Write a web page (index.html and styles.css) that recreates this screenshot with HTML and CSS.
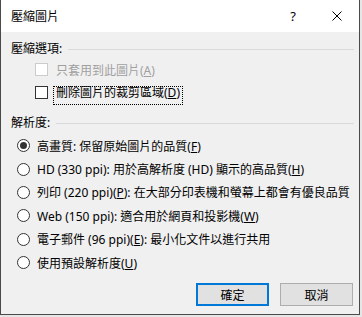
FILE: index.html
```html
<!DOCTYPE html>
<html>
    <head>
        <meta charset="utf-8" />
        <link rel="stylesheet" href="styles.css">
    </head>

    <body>
        <div class="dialog">
            <div class="titlebar">
                <span class="title">壓縮圖片</span>
                <span class="caption-btn help">?</span>
                <span class="caption-btn close">
                    <svg width="10" height="10" viewBox="0 0 10 10">
                        <path d="M0.5 0.5L9.5 9.5M9.5 0.5L0.5 9.5" stroke="#000" stroke-width="1" fill="none" />
                    </svg>
                </span>
            </div>

            <div class="content">
                <div class="group-head"><span>壓縮選項:</span><span class="rule"></span></div>
                <label class="check-row disabled">
                    <input type="checkbox" class="box" disabled />
                    <span>只套用到此圖片(<u>A</u>)</span>
                </label>
                <label class="check-row">
                    <input type="checkbox" class="box" />
                    <span class="focus">刪除圖片的裁剪區域(<u>D</u>)</span>
                </label>

                <div class="group-head second"><span>解析度:</span><span class="rule"></span></div>
                <div class="radios">
                    <label class="radio-row"><input type="radio" name="res" class="dot" checked /><span>高畫質: 保留原始圖片的品質(<u>F</u>)</span></label>
                    <label class="radio-row"><input type="radio" name="res" class="dot" /><span>HD (330 ppi): 用於高解析度 (HD) 顯示的高品質(<u>H</u>)</span></label>
                    <label class="radio-row"><input type="radio" name="res" class="dot" /><span>列印 (220 ppi)(<u>P</u>): 在大部分印表機和螢幕上都會有優良品質</span></label>
                    <label class="radio-row"><input type="radio" name="res" class="dot" /><span>Web (150 ppi): 適合用於網頁和投影機(<u>W</u>)</span></label>
                    <label class="radio-row"><input type="radio" name="res" class="dot" /><span>電子郵件 (96 ppi)(<u>E</u>): 最小化文件以進行共用</span></label>
                    <label class="radio-row"><input type="radio" name="res" class="dot" /><span>使用預設解析度(<u>U</u>)</span></label>
                </div>

                <div class="actions">
                    <button class="btn default">確定</button>
                    <button class="btn">取消</button>
                </div>
            </div>
        </div>
    </body>
</html>
```

FILE: styles.css
```css
body {
    margin: 0;
    background: #e6e6e6;
    font-family: "Noto Sans", "Noto Sans CJK TC", sans-serif;
    font-size: 12px;
    color: #000;
}

.dialog {
    width: 360px;
    height: 315px;
    box-sizing: border-box;
    border: 1px solid #4a4a4a;
    border-top: 0;
    background: #f0f0f0;
    display: flex;
    flex-direction: column;
}

.titlebar {
    height: 32px;
    flex-shrink: 0;
    background: #fff;
    display: flex;
    align-items: center;
    padding-left: 10px;
}

.title {
    flex: 1;
}

.caption-btn {
    width: 44px;
    height: 32px;
    display: flex;
    align-items: center;
    justify-content: center;
}

.help {
    font-size: 13px;
}

.content {
    flex: 1;
    display: flex;
    flex-direction: column;
    padding: 8px 5px 8px 10px;
}

.group-head {
    height: 18px;
    display: flex;
    align-items: center;
    gap: 6px;
    line-height: 18px;
}

.group-head.second {
    margin-top: 10px;
}

.group-head .rule {
    flex: 1;
    height: 1px;
    background: #dadada;
}

.check-row {
    height: 23px;
    display: flex;
    align-items: center;
    padding-left: 24px;
}

.check-row.disabled {
    color: #a0a0a0;
}

.box {
    -webkit-appearance: none;
    appearance: none;
    margin: 0 8px 0 0;
    width: 13px;
    height: 13px;
    box-sizing: border-box;
    border: 1px solid #333;
    background: #fff;
}

.box:disabled {
    border-color: #cccccc;
}

.focus {
    border: 1px dotted #000;
    padding: 0 2px 5px 2px;
    margin: 6px 0 0 -3px;
    line-height: 12px;
}

.radios {
    margin-top: 2px;
}

.radio-row {
    height: 23.4px;
    display: flex;
    align-items: center;
    padding-left: 6px;
}

.dot {
    -webkit-appearance: none;
    appearance: none;
    margin: 0 7px 0 0;
    width: 13px;
    height: 13px;
    box-sizing: border-box;
    border: 1px solid #333;
    border-radius: 50%;
    background: #fff;
    display: flex;
    align-items: center;
    justify-content: center;
}

.dot:checked::after {
    content: "";
    width: 7px;
    height: 7px;
    border-radius: 50%;
    background: #333;
}

u {
    text-underline-offset: 1px;
}

.actions {
    margin-top: auto;
    display: flex;
    justify-content: flex-end;
    gap: 11px;
    padding-right: 1px;
}

.btn {
    width: 73px;
    height: 23px;
    box-sizing: border-box;
    border: 1px solid #adadad;
    background: #e1e1e1;
    font-family: inherit;
    font-size: 12px;
    color: #000;
    padding: 0;
}

.btn.default {
    border: 2px solid #0078d7;
}
```
